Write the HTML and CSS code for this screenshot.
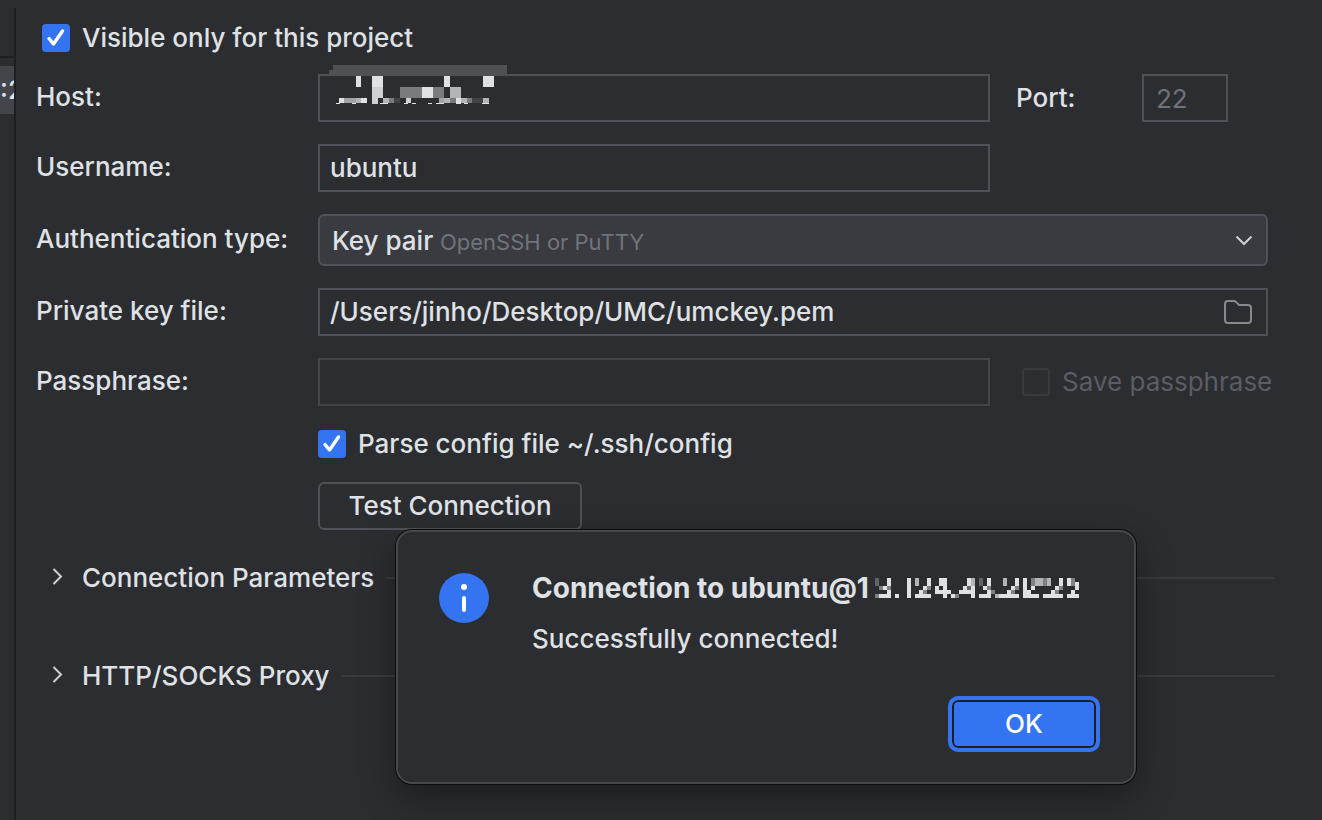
FILE: index.html
```html
<!DOCTYPE html>
<html lang="en">

<head>
    <meta charset="UTF-8" />
    <meta name="viewport" content="width=device-width, initial-scale=1" />
    <title>SSH Configurations</title>
    <link rel="stylesheet" href="styles.css">
</head>

<body>

    <aside class="sidebar">
        <div class="sidebar-toolbar"></div>
        <div class="sidebar-item">:2</div>
    </aside>

    <main class="settings">
        <form class="form">
            <label class="check-row first">
                <input type="checkbox" checked />
                <span>Visible only for this project</span>
            </label>

            <div class="row">
                <label class="name" for="host">Host:</label>
                <div class="field">
                    <input type="text" id="host" />
                    <svg class="host-mask" viewBox="57 30 534 117" shape-rendering="crispEdges" aria-hidden="true">
                        <g fill="#505155">
                            <rect x="69" y="30" width="522" height="30" />
                            <rect x="57" y="45" width="12" height="15" />
                        </g>
                        <g fill="#dfe1e5">
                            <rect x="138" y="63" width="15" height="33" />
                            <rect x="186" y="63" width="33" height="33" />
                            <rect x="402" y="63" width="18" height="33" />
                            <rect x="519" y="63" width="33" height="33" />
                            <rect x="336" y="96" width="33" height="33" />
                            <rect x="87" y="129" width="15" height="15" />
                            <rect x="153" y="129" width="18" height="15" />
                            <rect x="438" y="129" width="15" height="18" />
                            <rect x="78" y="144" width="12" height="3" />
                            <rect x="126" y="144" width="12" height="3" />
                            <rect x="210" y="144" width="24" height="3" />
                            <rect x="282" y="144" width="12" height="3" />
                            <rect x="306" y="144" width="12" height="3" />
                            <rect x="354" y="144" width="12" height="3" />
                            <rect x="378" y="144" width="24" height="3" />
                            <rect x="462" y="144" width="12" height="3" />
                            <rect x="516" y="144" width="21" height="3" />
                        </g>
                        <g fill="#cfd0d4">
                            <rect x="186" y="96" width="33" height="33" />
                            <rect x="186" y="129" width="18" height="18" />
                            <rect x="288" y="129" width="15" height="15" />
                        </g>
                        <g fill="#b4b5b9">
                            <rect x="420" y="96" width="33" height="33" />
                            <rect x="138" y="129" width="15" height="15" />
                            <rect x="219" y="129" width="18" height="15" />
                            <rect x="402" y="129" width="18" height="15" />
                            <rect x="453" y="129" width="18" height="15" />
                            <rect x="519" y="129" width="18" height="15" />
                        </g>
                        <g fill="#a2a3a7">
                            <rect x="102" y="129" width="36" height="15" />
                            <rect x="387" y="129" width="15" height="15" />
                        </g>
                        <g fill="#7a7b7f">
                            <rect x="270" y="96" width="66" height="33" />
                            <rect x="369" y="96" width="33" height="33" />
                            <rect x="237" y="129" width="15" height="15" />
                            <rect x="420" y="129" width="18" height="15" />
                            <rect x="471" y="129" width="15" height="15" />
                        </g>
                        <g fill="#434448">
                            <rect x="252" y="129" width="18" height="15" />
                            <rect x="486" y="129" width="33" height="15" />
                        </g>
                    </svg>
                </div>
                <div class="side">
                    <label for="port">Port:</label>
                    <input type="text" class="port" id="port" value="22" disabled />
                </div>
            </div>

            <div class="row">
                <label class="name" for="username">Username:</label>
                <div class="field">
                    <input type="text" id="username" value="ubuntu" />
                </div>
                <div class="side"></div>
            </div>

            <div class="row">
                <label class="name" for="authType">Authentication type:</label>
                <div class="field combo">
                    <select id="authType">
                        <option>Key pair</option>
                        <option>Password</option>
                        <option>OpenSSH config and authentication agent</option>
                    </select>
                    <span class="combo-hint">OpenSSH or PuTTY</span>
                    <svg class="combo-arrow" width="18" height="12" viewBox="0 0 18 12" aria-hidden="true">
                        <path d="M1.500 2.500 9 10 16.500 2.500" />
                    </svg>
                </div>
            </div>

            <div class="row">
                <label class="name" for="keyFile">Private key file:</label>
                <div class="field">
                    <input type="text" id="keyFile" value="/Users/jinho/Desktop/UMC/umckey.pem" />
                    <button type="button" class="browse" aria-label="Browse">
                        <svg width="28" height="24" viewBox="0 0 28 24">
                            <path d="M1 4a3 3 0 0 1 3-3h6.300a2 2 0 0 1 1.400.6L15 5h9a3 3 0 0 1 3 3v12a3 3 0 0 1-3 3H4a3 3 0 0 1-3-3z" />
                        </svg>
                    </button>
                </div>
            </div>

            <div class="row">
                <label class="name" for="passphrase">Passphrase:</label>
                <div class="field dim">
                    <input type="password" id="passphrase" />
                </div>
                <div class="side">
                    <label class="check-row disabled">
                        <input type="checkbox" disabled />
                        <span>Save passphrase</span>
                    </label>
                </div>
            </div>

            <div class="indent">
                <label class="check-row">
                    <input type="checkbox" checked />
                    <span>Parse config file ~/.ssh/config</span>
                </label>
            </div>

            <div class="indent">
                <button type="button" class="test">Test Connection</button>
            </div>
        </form>

        <div class="groups">
            <button type="button" class="group">
                <svg width="28" height="28" viewBox="0 0 28 28"><path d="M11.500 5 19 12.500l-7.500 7.500" /></svg>
                <span>Connection Parameters</span>
            </button>
            <button type="button" class="group">
                <svg width="28" height="28" viewBox="0 0 28 28"><path d="M11.500 5 19 12.500l-7.500 7.500" /></svg>
                <span>HTTP/SOCKS Proxy</span>
            </button>
        </div>
    </main>

    <div class="dialog" role="dialog" aria-labelledby="dialogTitle">
        <svg class="dialog-icon" width="50" height="50" viewBox="0 0 50 50" aria-hidden="true">
            <circle cx="25" cy="25" r="25" fill="#3574f0" />
            <circle cx="25" cy="14" r="3" fill="#fff" />
            <rect x="23" y="23" width="4" height="16" rx="2" fill="#fff" />
        </svg>
        <div class="dialog-body">
            <h1 id="dialogTitle">
                <span>Connection to ubuntu@1</span>
                <svg width="204" height="20" viewBox="0 0 51 5" shape-rendering="crispEdges" aria-hidden="true">
                    <path fill="#dfe1e5" d="M3 0h1v2h-1zM2 2h1v1h-1zM3 3h1v1h-1zM1 4h3v1h-3zM5 4h1v1h-1zM8 0h1v5h-1z
                        M13 0h1v2h-1zM12 2h1v1h-1zM11 3h1v1h-1zM10 4h4v1h-4z
                        M16 0h2v2h-2zM15 2h1v1h-1zM17 2h1v1h-1zM15 3h4v1h-4zM17 4h1v1h-1zM19 4h1v1h-1z
                        M23 0h1v2h-1zM22 2h1v1h-1zM24 2h1v3h-1zM21 3h4v1h-4z
                        M28 0h1v2h-1zM27 2h1v1h-1zM28 3h1v1h-1zM26 4h3v1h-3zM31 4h5v1h-5z
                        M35 0h1v2h-1zM34 2h1v1h-1zM33 3h1v1h-1z
                        M37 0h1v5h-1zM39 2h1v1h-1zM38 3h1v1h-1zM38 4h3v1h-3z
                        M46 0h1v2h-1zM45 2h1v1h-1zM44 3h1v1h-1zM42 4h5v1h-5z
                        M48 0h1v2h-1zM50 1h1v2h-1zM49 3h1v1h-1zM48 4h3v1h-3z" />
                    <path fill="#b4b5b9" d="M10 0h1v2h-1zM24 0h1v2h-1zM32 0h1v2h-1zM40 0h2v2h-2zM43 0h1v2h-1zM30 4h1v1h-1z" />
                    <path fill="#808185" d="M1 2h1v1h-1zM3 2h1v1h-1zM0 4h1v1h-1zM13 2h1v1h-1zM12 3h1v1h-1zM20 4h1v1h-1z
                        M28 2h1v1h-1zM29 3h1v1h-1zM35 2h1v1h-1zM34 3h1v1h-1zM39 0h1v2h-1zM42 0h1v2h-1z
                        M46 2h1v1h-1zM45 3h1v1h-1zM49 0h1v2h-1z" />
                    <path fill="#626367" d="M0 0h1v2h-1zM26 0h1v2h-1zM23 2h1v1h-1z" />
                </svg>
            </h1>
            <p>Successfully connected!</p>
            <button type="button" class="ok">OK</button>
        </div>
    </div>

</body>

</html>
```
FILE: styles.css
```css
* {
    box-sizing: border-box;
}

body {
    display: flex;
    min-height: 100vh;
    margin: 0;
    padding-top: 8px;
    overflow: hidden;
    background: #2b2d30;
    color: #dfe1e5;
    font-family: Inter, "Liberation Sans", sans-serif;
    font-size: 26px;
    font-weight: 500;
    line-height: 32px;
}

input,
select,
button {
    margin: 0;
    padding: 0;
    border: none;
    background: none;
    color: inherit;
    font: inherit;
}

svg {
    flex: none;
}

.sidebar {
    flex: none;
    width: 16px;
    overflow: hidden;
    border-right: 2px solid #1e1f22;
}

.sidebar-toolbar {
    height: 50px;
    margin-bottom: 8px;
    border-bottom: 2px solid #1e1f22;
}

.sidebar-item {
    height: 48px;
    padding-top: 8px;
    background: #43454a;
}

.settings {
    flex: 1;
    padding: 16px 54px 0 20px;
}

.form {
    display: flex;
    flex-direction: column;
    gap: 22px;
}

.check-row {
    display: flex;
    align-items: center;
    gap: 12px;
    white-space: nowrap;
}

.check-row.first {
    height: 28px;
    padding-left: 6px;
}

.check-row.disabled {
    color: #5a5d63;
    font-weight: 400;
}

input[type="checkbox"] {
    flex: none;
    appearance: none;
    width: 28px;
    height: 28px;
    border: 2px solid #393b40;
    border-radius: 4px;
}

input[type="checkbox"]:checked {
    border: none;
    background: #3574f0 url("data:image/svg+xml,%3Csvg xmlns='http://www.w3.org/2000/svg' viewBox='0 0 28 28'%3E%3Cpath d='M7 14.5l4.5 5.5L20.500 7' fill='none' stroke='white' stroke-width='3.4' stroke-linecap='round' stroke-linejoin='round'/%3E%3C/svg%3E");
}

.row {
    display: flex;
    align-items: center;
}

.name {
    flex: none;
    width: 282px;
    padding-bottom: 2px;
    white-space: nowrap;
}

.field {
    position: relative;
    display: flex;
    flex: 1;
    align-items: center;
    height: 48px;
    border: 2px solid #4e5157;
}

.field.dim {
    border-color: #43454a;
}

.field input {
    flex: 1;
    min-width: 0;
    height: 44px;
    padding: 0 10px 2px;
    outline: none;
}

/* blurred out address, spills over the top edge of the field */
.host-mask {
    position: absolute;
    top: -11px;
    left: 9px;
    width: 178px;
    height: 39px;
}

.side {
    display: flex;
    flex: none;
    align-items: center;
    justify-content: space-between;
    width: 278px;
    padding: 0 40px 0 26px;
}

.side .check-row {
    padding-left: 6px;
}

.port {
    width: 86px;
    height: 48px;
    padding-left: 12px;
    border: 2px solid #4e5157;
    color: #6f737a;
    font-weight: 400;
}

.combo {
    height: 52px;
    border-radius: 6px;
    background: #393b40;
}

.combo select {
    width: 100%;
    height: 48px;
    padding: 2px 0 0 12px;
    appearance: none;
    outline: none;
}

.combo-hint {
    position: absolute;
    top: 10px;
    left: 120px;
    color: #6f737a;
    font-size: 22px;
    font-weight: 400;
    pointer-events: none;
}

.combo-arrow {
    position: absolute;
    right: 13px;
    fill: none;
    stroke: #ced0d6;
    stroke-width: 2;
    pointer-events: none;
}

.browse {
    display: flex;
    margin-right: 14px;
}

.browse svg {
    fill: none;
    stroke: #868a91;
    stroke-width: 2;
}

.indent {
    display: flex;
    padding-left: 282px;
}

.test {
    min-width: 264px;
    height: 48px;
    padding: 0 26px;
    border: 2px solid #4e5157;
    border-radius: 6px;
}

.groups {
    display: flex;
    flex-direction: column;
    gap: 66px;
    margin: 32px -6px 0 6px;
}

.group {
    display: flex;
    align-items: center;
    gap: 12px;
    white-space: nowrap;
}

.group svg {
    fill: none;
    stroke: #ced0d6;
    stroke-width: 2;
}

.group::after {
    content: "";
    flex: 1;
    height: 2px;
    background: #393b40;
}

.dialog {
    position: absolute;
    top: 530px;
    left: 396px;
    display: flex;
    gap: 43px;
    width: 740px;
    height: 254px;
    padding: 41px 34px 30px 41px;
    border: 2px solid #46484d;
    border-radius: 16px;
    background: #2b2d30;
    box-shadow: 0 0 0 1px #0c0c0d, 0 14px 36px rgba(0, 0, 0, 0.35);
}

.dialog-body {
    display: flex;
    flex: 1;
    flex-direction: column;
}

.dialog h1 {
    display: flex;
    align-items: center;
    gap: 6px;
    margin: 0;
    font-size: 28px;
    font-weight: 700;
    line-height: 30px;
    white-space: nowrap;
}

.dialog p {
    margin: 20px 0 0;
}

.ok {
    align-self: flex-end;
    width: 152px;
    height: 56px;
    margin-top: auto;
    border: 4px solid #3574f0;
    border-radius: 10px;
    background: #3574f0;
    box-shadow: inset 0 0 0 2px #1e1f22;
    color: #fff;
}
```
